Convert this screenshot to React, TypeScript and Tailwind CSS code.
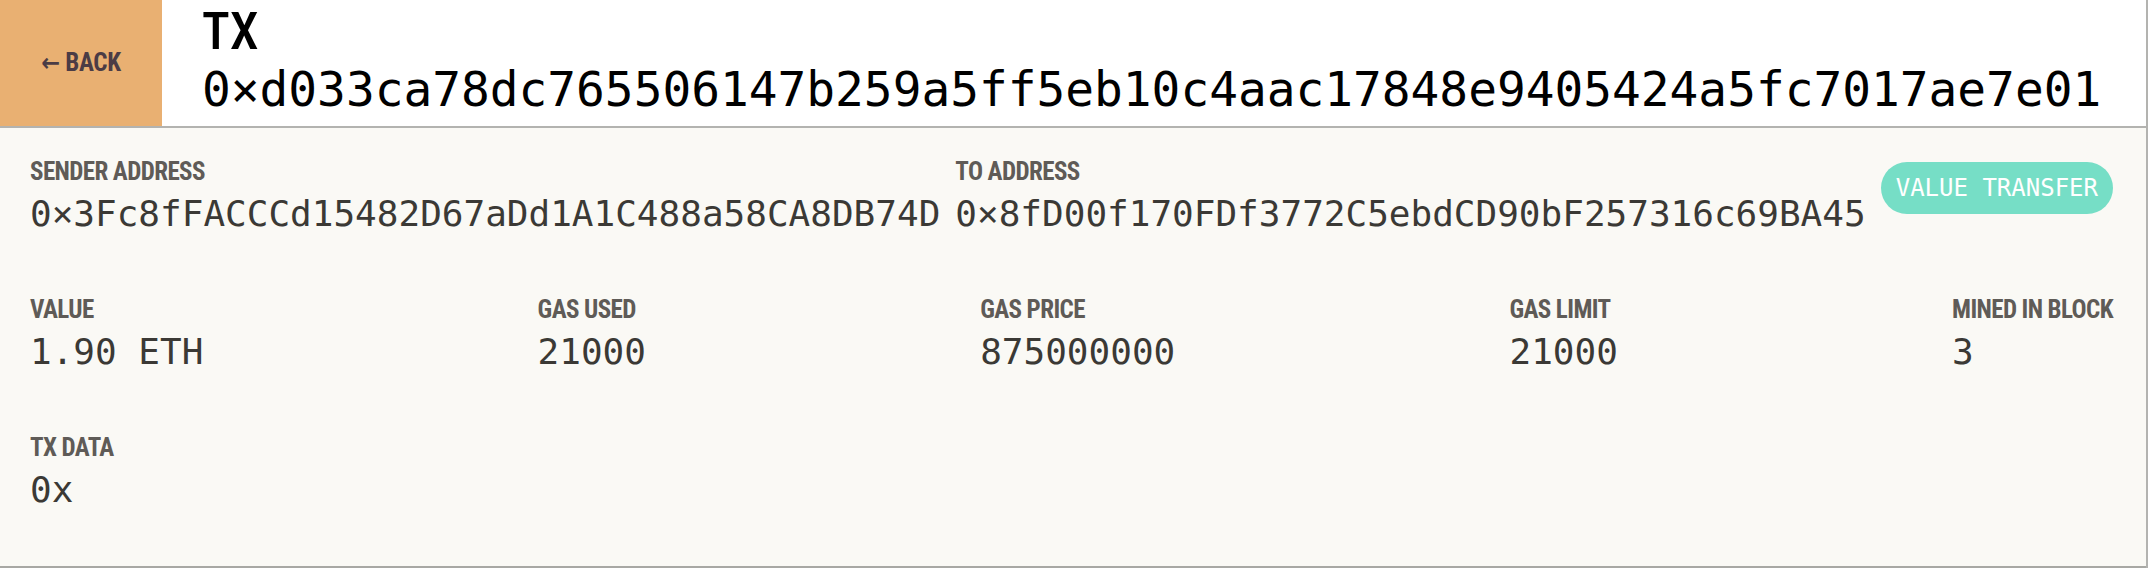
import React from "react";

const cond = "font-['Roboto_Condensed','Liberation_Sans_Narrow','DejaVu_Sans_Condensed',Roboto,sans-serif]";
const mono = "font-['DejaVu_Sans_Mono','Liberation_Mono',monospace]";

function Field({ label, value }: { label: string; value: string }) {
  return (
    <div className="flex flex-col">
      <div className={`${cond} text-[25px] leading-[32px] font-bold tracking-[-0.6px] text-[#5f5b57] uppercase`}>{label}</div>
      <div className={`${mono} text-[36px] leading-[52px] text-[#3b3935]`}>{value}</div>
    </div>
  );
}

export default function App() {
  return (
    <div className="w-[2148px] h-[568px] flex flex-col border-r-2 border-[#b3b3b0] bg-[#faf9f5]">
      <div className="h-[128px] flex bg-white border-b-2 border-[#b3b3b0]">
        <div className="w-[162px] bg-[#e9b072] flex items-center justify-center">
          <span className={`${cond} text-[25px] font-bold text-[#4b3c45] tracking-[-0.3px]`}>← BACK</span>
        </div>
        <div className="flex flex-col justify-center pl-[40px] pb-[5px]">
          <div className={`${cond} text-[52px] leading-[58px] font-medium text-black`}>TX</div>
          <div className={`${mono} text-[47.8px] leading-[58px] text-black`}>0×d033ca78dc765506147b259a5ff5eb10c4aac17848e9405424a5fc7017ae7e01</div>
        </div>
      </div>
      <div className="flex-1 flex flex-col pl-[30px] pr-[33px] pt-[28px] border-b-2 border-[#a8a8a4]">
        <div className="flex justify-between items-start">
          <Field label="Sender Address" value="0×3Fc8fFACCCd15482D67aDd1A1C488a58CA8DB74D" />
          <Field label="To Address" value="0×8fD00f170FDf3772C5ebdCD90bF257316c69BA45" />
          <div className={`mt-[6px] h-[52px] px-[15px] rounded-full bg-[#76dec6] flex items-center ${mono} text-[24px] text-white`}>VALUE TRANSFER</div>
        </div>
        <div className="flex justify-between mt-[54px]">
          <Field label="Value" value="1.90 ETH" />
          <Field label="Gas Used" value="21000" />
          <Field label="Gas Price" value="875000000" />
          <Field label="Gas Limit" value="21000" />
          <Field label="Mined in Block" value="3" />
        </div>
        <div className="flex mt-[54px]">
          <Field label="TX Data" value="0x" />
        </div>
      </div>
    </div>
  );
}
